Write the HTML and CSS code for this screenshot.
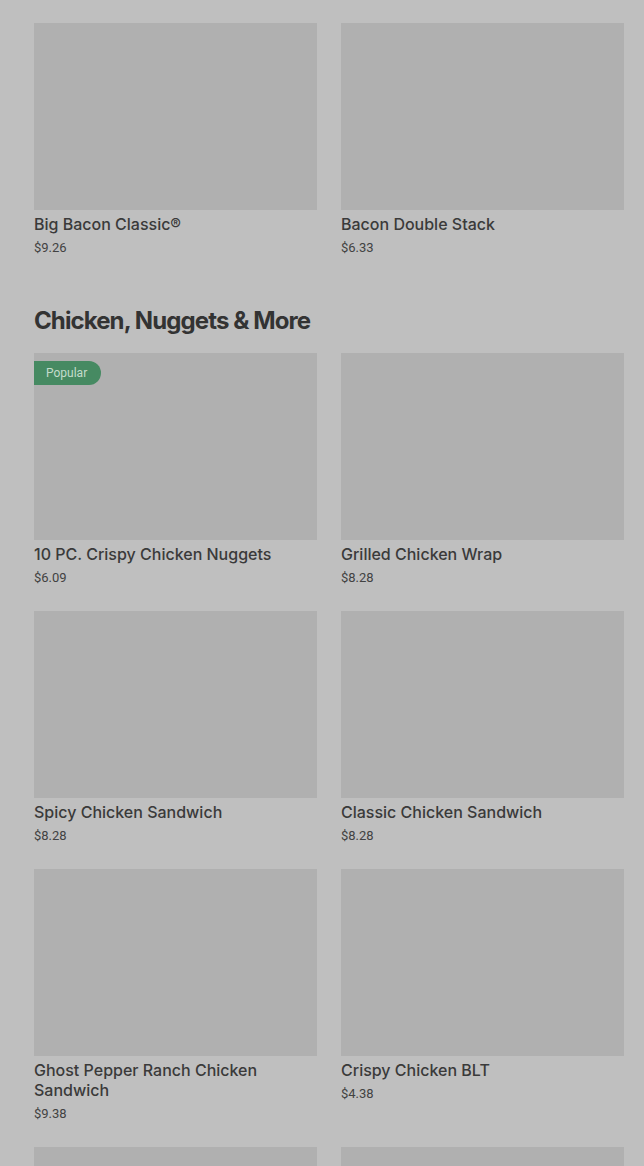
FILE: index.html
```html
<!DOCTYPE html>
<html lang="en">
<head>
  <meta charset="UTF-8" />
  <title>Menu</title>
  <link rel="stylesheet" href="styles.css">
</head>
<body>

<div class="menu">
  <div class="section">
    <div class="grid">
      <div class="item">
        <div class="photo"></div>
        <p class="name">Big Bacon Classic®</p>
        <p class="price">$9.26</p>
      </div>
      <div class="item">
        <div class="photo"></div>
        <p class="name">Bacon Double Stack</p>
        <p class="price">$6.33</p>
      </div>
    </div>
  </div>

  <div class="section">
    <h2>Chicken, Nuggets &amp; More</h2>
    <div class="grid">
      <div class="item">
        <div class="photo">
          <span class="badge">Popular</span>
        </div>
        <p class="name">10 PC. Crispy Chicken Nuggets</p>
        <p class="price">$6.09</p>
      </div>
      <div class="item">
        <div class="photo"></div>
        <p class="name">Grilled Chicken Wrap</p>
        <p class="price">$8.28</p>
      </div>
      <div class="item">
        <div class="photo"></div>
        <p class="name">Spicy Chicken Sandwich</p>
        <p class="price">$8.28</p>
      </div>
      <div class="item">
        <div class="photo"></div>
        <p class="name">Classic Chicken Sandwich</p>
        <p class="price">$8.28</p>
      </div>
      <div class="item">
        <div class="photo"></div>
        <p class="name">Ghost Pepper Ranch Chicken Sandwich</p>
        <p class="price">$9.38</p>
      </div>
      <div class="item">
        <div class="photo"></div>
        <p class="name">Crispy Chicken BLT</p>
        <p class="price">$4.38</p>
      </div>
      <div class="item">
        <div class="photo"></div>
      </div>
      <div class="item">
        <div class="photo"></div>
      </div>
    </div>
  </div>
</div>

</body>
</html>
```

FILE: styles.css
```css
body {
  margin: 0;
  background: #bfbfbf;
  font-family: Roboto, "Liberation Sans", sans-serif;
  color: #363636;
}
.menu {
  padding: 23px 20px 0 34px;
}
.section + .section {
  padding-top: 47px;
}
h2 {
  margin: 0 0 16px;
  font-family: Inter, "Liberation Sans", sans-serif;
  font-size: 24px;
  line-height: 32px;
  font-weight: 700;
  letter-spacing: -0.9px;
  color: #333;
}
.grid {
  display: grid;
  grid-template-columns: 1fr 1fr;
  column-gap: 24px;
  row-gap: 23px;
}
.photo {
  position: relative;
  height: 187px;
  background: #b0b0b0;
}
.name {
  margin: 4px 0 0;
  font-family: Inter, "Liberation Sans", sans-serif;
  font-size: 16px;
  line-height: 20px;
  font-weight: 500;
  color: #3a3a3a;
}
.price {
  margin: 4px 0 0;
  font-size: 13px;
  line-height: 20px;
  color: #424242;
}
.badge {
  position: absolute;
  top: 8px;
  left: 0;
  padding: 0 14px 0 12px;
  height: 24px;
  line-height: 24px;
  font-size: 12px;
  color: #c4dccc;
  background: #468a62;
  border-radius: 0 12px 12px 0;
}
```
